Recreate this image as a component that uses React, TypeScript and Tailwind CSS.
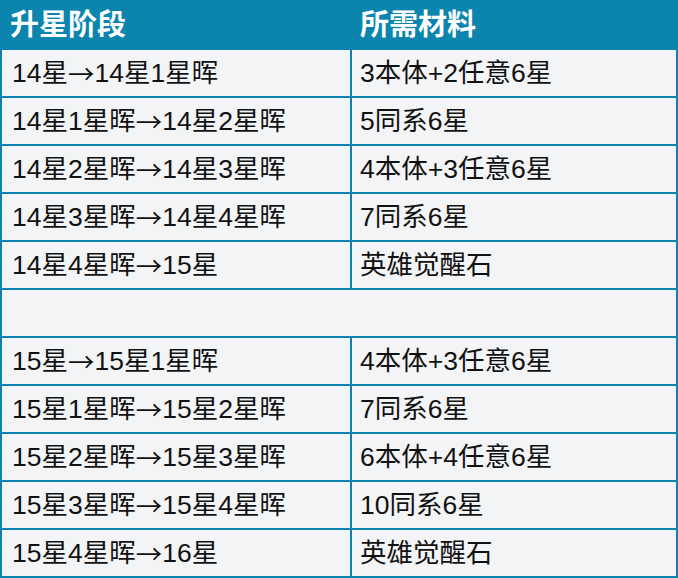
const rows: [string, string][] = [
  ["14星→14星1星晖", "3本体+2任意6星"],
  ["14星1星晖→14星2星晖", "5同系6星"],
  ["14星2星晖→14星3星晖", "4本体+3任意6星"],
  ["14星3星晖→14星4星晖", "7同系6星"],
  ["14星4星晖→15星", "英雄觉醒石"],
  ["", ""],
  ["15星→15星1星晖", "4本体+3任意6星"],
  ["15星1星晖→15星2星晖", "7同系6星"],
  ["15星2星晖→15星3星晖", "6本体+4任意6星"],
  ["15星3星晖→15星4星晖", "10同系6星"],
  ["15星4星晖→16星", "英雄觉醒石"],
];

const font = { fontFamily: '"Liberation Sans", "Noto Sans CJK SC", sans-serif' };

function Stage({ text }: { text: string }) {
  const [from, to] = text.split("→");
  return (
    <>
      {from}
      <span style={{ fontFamily: '"Noto Sans CJK SC", sans-serif' }}>→</span>
      {to}
    </>
  );
}

export default function App() {
  return (
    <div
      className="flex w-[678px] flex-col gap-[2px] bg-[#0b85ad] px-[2px] pb-[2px]"
      style={font}
    >
      <div className="grid h-[48px] grid-cols-[348px_324px] gap-[2px] text-[29px] font-bold text-white">
        <div className="flex items-center pl-[8px] pt-[4px]">升星阶段</div>
        <div className="flex items-center pl-[8px] pt-[4px]">所需材料</div>
      </div>

      {rows.map(([stage, cost], i) =>
        stage === "" ? (
          <div key={i} className="h-[46px] bg-[#f3f4f6]" />
        ) : (
          <div
            key={i}
            className="grid h-[46px] grid-cols-[348px_324px] gap-[2px] text-[26.5px] leading-none text-[#111]"
          >
            <div className="flex items-center bg-[#f3f4f6] pl-[10px]">
              <Stage text={stage} />
            </div>
            <div className="flex items-center bg-[#f3f4f6] pl-[8px]">{cost}</div>
          </div>
        )
      )}
    </div>
  );
}
